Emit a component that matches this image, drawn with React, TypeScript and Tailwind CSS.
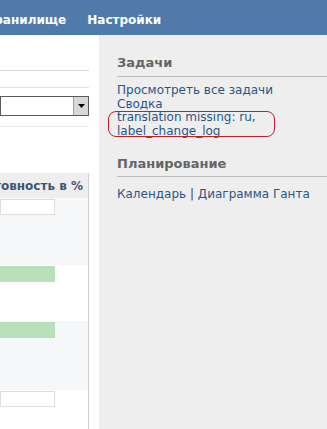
import * as React from "react";

const rows = [
    { bg: "bg-[#f6f7f8]", done: false, h: "h-[67px]" },
    { bg: "bg-white", done: true, h: "h-[56px]" },
    { bg: "bg-[#f6f7f8]", done: true, h: "h-[69px]" },
    { bg: "bg-white", done: false, h: "h-[60px]" },
];

export default function App() {
    return (
        <div className="h-[429px] w-[327px] overflow-hidden bg-white font-['DejaVu_Sans',Verdana,sans-serif] text-[12px]">
            <div className="flex h-[35px] items-end overflow-hidden bg-[#507aaa] pb-[6px] font-bold text-white">
                <span className="-ml-[15px] whitespace-nowrap">Хранилище</span>
                <span className="ml-[21px] whitespace-nowrap">Настройки</span>
            </div>
            <div className="flex h-[394px]">
                <div className="w-[99px] shrink-0">
                    <div className="w-[89px] pt-[35px]">
                        <div className="h-px bg-[#d5d5d5]" />
                        <div className="mt-[16px] h-px bg-[#e0e0e0]" />
                        <div className="mt-[8px] flex h-[20px] border border-[#5a5a5a] bg-white">
                            <div className="flex-1" />
                            <div className="flex w-[15px] items-center justify-center border-l border-[#a0a0a0] bg-[#d8d8d8]">
                                <svg width="7" height="4" viewBox="0 0 7 4">
                                    <path d="M0 0h7L3.5 4z" fill="#000" />
                                </svg>
                            </div>
                        </div>
                        <div className="mt-[10px] h-px bg-[#eaeaea]" />
                    </div>
                    <div className="mt-[46px] w-[89px] border-r border-[#d0d0d0]">
                        <div className="flex h-[25px] items-center justify-end overflow-hidden bg-[#eeeeee] pr-[5px] font-bold text-[#3a5577]">
                            <span className="whitespace-nowrap">Готовность в %</span>
                        </div>
                        {rows.map((r, i) => (
                            <div key={i} className={`${r.bg} ${r.h} pt-[1px]`}>
                                <div
                                    className={
                                        r.done
                                            ? "h-[16px] w-[55px] bg-[#bae0ba]"
                                            : "h-[16px] w-[55px] border border-[#dddddd] bg-white"
                                    }
                                />
                            </div>
                        ))}
                    </div>
                </div>
                <div className="relative flex-1 bg-[#eeeeee] pl-[18px] pt-[18px]">
                    <h3 className="border-b border-[#bbbbbb] pb-[3px] text-[13px] font-bold text-[#666666]">
                        Задачи
                    </h3>
                    <div className="mt-[7px] text-[#2a5685]">
                        <div className="leading-[13px]">Просмотреть все задачи</div>
                        <div className="leading-[14px]">Сводка</div>
                        <div className="leading-[13px]">translation missing: ru,</div>
                        <div className="leading-[14px]">label_change_log</div>
                    </div>
                    <div className="absolute left-[9px] top-[76px] h-[26px] w-[167px] rounded-[8px] border border-[#c0202a]" />
                    <h3 className="mt-[16px] border-b border-[#bbbbbb] pb-[3px] text-[13px] font-bold text-[#666666]">
                        Планирование
                    </h3>
                    <div className="mt-[8px] text-[#2a5685]">
                        Календарь <span className="text-[#444]">|</span> Диаграмма Ганта
                    </div>
                </div>
            </div>
        </div>
    );
}
